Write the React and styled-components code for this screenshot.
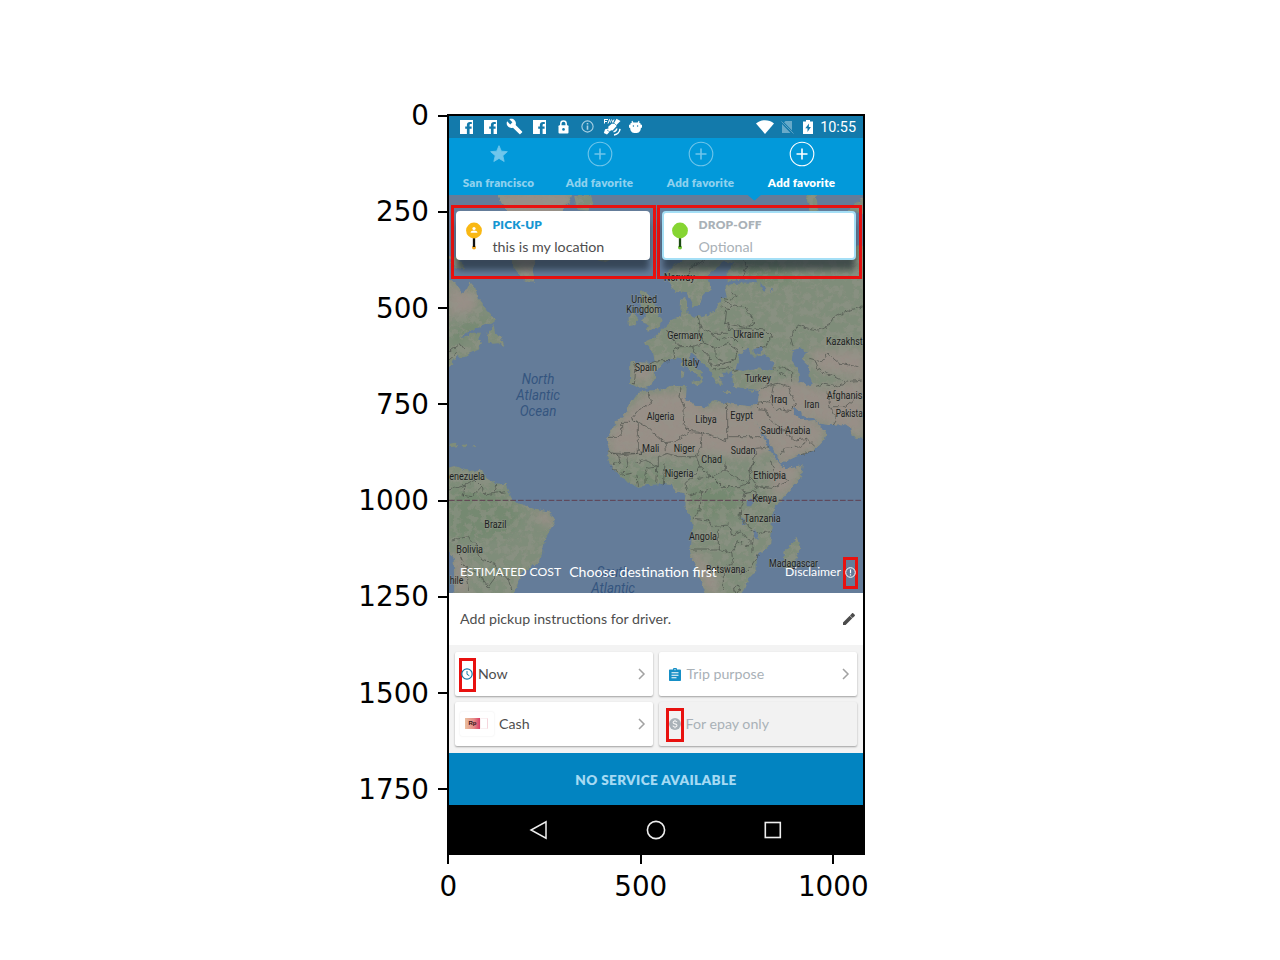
import React from "react";
import styled, { createGlobalStyle } from "styled-components";

const GlobalStyle = createGlobalStyle`
  * { box-sizing: border-box; }
  body { margin: 0; background: #fff; font-family: Lato, "Open Sans", sans-serif; }
`;

const Figure = styled.main`
  width: 1280px;
  height: 960px;
  overflow: hidden;
  padding: 68px 0 0 340px;
`;
const PlotRow = styled.div`
  display: flex;
  align-items: flex-start;
`;
const YAxis = styled.div`
  width: 107px;
  display: flex;
  flex-direction: column;
`;
const YTick = styled.div`
  height: 96.25px;
  display: flex;
  align-items: center;
  justify-content: flex-end;
  gap: 9px;
  font: 27.78px/1 "DejaVu Sans", sans-serif;
  color: #000;
  &::after { content: ""; width: 9px; height: 2px; margin-top: -1px; background: #000; }
`;
const XAxis = styled.div`
  display: flex;
  margin-left: 12px;
`;
const XTick = styled.div`
  width: 192.5px;
  display: flex;
  flex-direction: column;
  align-items: center;
  gap: 9px;
  font: 27.78px/1 "DejaVu Sans", sans-serif;
  color: #000;
  &::before { content: ""; width: 2px; height: 9px; background: #000; }
`;
const Phone = styled.section`
  width: 418px;
  height: 741px;
  margin-top: 46px;
  border: 2px solid #000;
  display: flex;
  flex-direction: column;
  overflow: hidden;
  flex: none;
`;

const StatusBar = styled.header`
  height: 22px;
  flex: none;
  background: #137aab;
  display: flex;
  align-items: center;
  padding: 0 7px 1px 5.5px;
  color: #fff;
`;
const StatusSlot = styled.div`
  width: ${(p) => p.$w || 24.2}px;
  height: 100%;
  display: flex;
  align-items: center;
  justify-content: center;
`;
const Spacer = styled.div`
  flex: 1;
`;
const Time = styled.div`
  font: 14.4px/22px Roboto, sans-serif;
  padding-top: 2px;
  margin-left: 3px;
`;

const Tabs = styled.nav`
  height: 57px;
  flex: none;
  background: #0299da;
  display: grid;
  grid-template-columns: repeat(4, 101px);
  margin-left: -1px;
`;
const Tab = styled.div`
  display: flex;
  flex-direction: column;
  align-items: center;
  padding-top: 3px;
  color: ${(p) => (p.$active ? "#fff" : "#8fd1ee")};
`;
const TabIcon = styled.div`
  height: 26px;
  display: flex;
  align-items: center;
`;
const TabLabel = styled.div`
  font-size: 11.6px;
  letter-spacing: 0.18px;
  font-weight: 800;
  line-height: 16px;
  margin-top: 8px;
  white-space: nowrap;
`;

const MapArea = styled.section`
  height: 398px;
  flex: none;
  display: grid;
  background: #647c99;
  & > * { grid-area: 1 / 1; }
`;
const MapSvg = styled.svg`
  display: block;
  width: 414px;
  height: 398px;
`;
const MapOverlay = styled.div`
  display: flex;
  flex-direction: column;
  justify-content: space-between;
  padding: 10px 1px 4px 2px;
  z-index: 1;
`;
const CardRow = styled.div`
  display: flex;
  gap: 1px;
`;
const CardOutline = styled.div`
  width: 205px;
  height: 74px;
  border: 3px solid #e8110f;
  padding: 3px 0 0 2px;
`;
const PlaceCard = styled.div`
  width: 194px;
  height: 49px;
  border-radius: 4px;
  background: #fff;
  border: 2px solid ${(p) => (p.$soft ? "#a5dff6" : "#fff")};
  box-shadow: 0 11px 6px -1px rgba(25, 35, 45, 0.6);
  display: flex;
  align-items: flex-start;
`;
const PinBox = styled.div`
  width: 34.5px;
  padding: 8px 0 0 7px;
`;
const CardTitle = styled.div`
  font-size: 11.9px;
  letter-spacing: 0.22px;
  font-weight: 800;
  line-height: 16px;
  padding-top: 4px;
  color: ${(p) => (p.$soft ? "#a9b1b7" : "#1496d2")};
`;
const CardText = styled.div`
  font-size: 14.25px;
  line-height: 20px;
  margin-top: 4px;
  color: ${(p) => (p.$soft ? "#a9b1b7" : "#4e4e4e")};
`;
const CostBar = styled.div`
  display: flex;
  align-items: center;
  color: #fff;
  height: 32px;
  padding: 0 4px 0 9px;
`;
const CostText = styled.div`
  font-size: ${(p) => p.$size}px;
  margin-right: ${(p) => p.$gap || 0}px;
  white-space: nowrap;
  padding-bottom: 4px;
`;
const RedBox = styled.div`
  width: ${(p) => p.$w || 17}px;
  height: ${(p) => p.$h || 34}px;
  margin-top: ${(p) => p.$drop || 0}px;
  border: 3px solid #e8110f;
  display: flex;
  align-items: center;
  justify-content: center;
  flex: none;
  & > svg { flex: none; margin-left: ${(p) => p.$shift || 0}px; margin-top: -2px; }
`;

const Instructions = styled.section`
  height: 52px;
  flex: none;
  background: #fff;
  display: flex;
  align-items: center;
  justify-content: space-between;
  padding: 0 8px 1px 11px;
  font-size: 14.2px;
  color: #4e4e4e;
`;
const Options = styled.section`
  height: 108px;
  flex: none;
  background: #f3f3f3;
  display: grid;
  grid-template-columns: 198px 198px;
  grid-template-rows: 44px 44px;
  gap: 6px;
  padding: 7px 6px;
`;
const Option = styled.div`
  background: ${(p) => (p.$disabled ? "#f2f2f2" : "#fff")};
  border-radius: 2px;
  box-shadow: 0 1px 2px rgba(0, 0, 0, 0.35);
  display: flex;
  align-items: center;
  padding: 0 7.5px 0 ${(p) => p.$left}px;
  gap: ${(p) => p.$gap}px;
  color: ${(p) => (p.$soft ? "#a9b1b7" : "#4e4e4e")};
`;
const OptionLabel = styled.div`
  flex: 1;
  font-size: 14.2px;
  line-height: 18px;
  padding-bottom: 1px;
`;
const CashIcon = styled.div`
  width: 34px;
  height: 24px;
  border-radius: 2px;
  box-shadow: 0 0 2px rgba(0, 0, 0, 0.1);
  display: flex;
  align-items: center;
  padding: 0 0 2px 5px;
`;
const Note = styled.div`
  width: 15px;
  height: 11px;
  background: linear-gradient(90deg, #eabf9f, #e58a86 60%, #d83c66);
  font: bold 6px/11px "Liberation Sans", sans-serif;
  text-align: center;
  color: #301018;
`;
const NoteEdge = styled.div`
  width: 8px;
  height: 11px;
  border: 1px solid #faeff1;
  border-right-color: #f5d5dc;
`;
const Action = styled.div`
  height: 52px;
  flex: none;
  background: #0284c1;
  color: #a5daf3;
  font-size: 13.6px;
  letter-spacing: 0.35px;
  font-weight: 800;
  display: flex;
  align-items: center;
  justify-content: center;
  padding-top: 1px;
`;
const NavBar = styled.footer`
  flex: 1;
  background: #000;
  display: flex;
  align-items: center;
  justify-content: center;
  gap: 97px;
  padding: 1px 0 0;
`;

const Facebook = () => (
  <svg width="13" height="14" viewBox="0 0 13 14">
    <path d="M0 0h13v14H9.600V8.800h2V6.500h-2V5.200c0-.8.3-1.200 1.100-1.200h1.100V1.900H10C8 1.900 6.900 3 6.900 4.800v1.700H5.200v2.300h1.700V14H0z" fill="#fff" />
  </svg>
);
const Wrench = () => (
  <svg width="17" height="17" viewBox="0 0 24 24">
    <path d="M22.700 19l-9.100-9.100c.9-2.300.4-5-1.500-6.900-2-2-5-2.400-7.400-1.300L9 6 6 9 1.600 4.700C.4 7.100.9 10.100 2.900 12.100c1.900 1.900 4.600 2.400 6.900 1.500l9.100 9.100c.4.400 1 .4 1.400 0l2.300-2.300c.5-.4.5-1.100.1-1.400z" fill="#fff" />
  </svg>
);
const Lock = () => (
  <svg width="11" height="14" viewBox="0 0 11 14">
    <path d="M2.800 6V3.800a2.700 2.700 0 0 1 5.400 0V6" fill="none" stroke="#fff" strokeWidth="1.500" />
    <rect x=".5" y="5.300" width="10" height="8.200" rx="1" fill="#fff" />
    <circle cx="5.500" cy="9.400" r="1.300" fill="#137aab" />
  </svg>
);
const Info = () => (
  <svg width="13" height="13" viewBox="0 0 13 13">
    <circle cx="6.500" cy="6.500" r="5.600" fill="none" stroke="#a9d0e4" strokeWidth="1.100" />
    <path d="M6.500 3.100v1.400M6.500 5.600v4.200" stroke="#a9d0e4" strokeWidth="1.600" />
  </svg>
);
const Satellite = () => (
  <svg width="18" height="18" viewBox="0 0 18 18">
    <path d="M1 1.500h4M1.500 1.500v4M1.500 3.500h2.500M5 5.500l1.500-4 1 3M8.500 1.500l1.300 3 1.200-3" stroke="#fff" strokeWidth="1" fill="none" />
    <path d="M13.500 .8l4 2.200-4.300 4.300 .3 .9-4 4.200-1.500-.2L4 16.500.8 15l1.300-3.800 3.400-.7-.3-1.800L9 5.500l1.500.5z" fill="#fff" />
    <path d="M4 12l3 2M11 5l2 2" stroke="#137aab" strokeWidth=".6" />
    <path d="M10.500 13.800a4 4 0 0 0 3.300-3.300M11 16.900a6.500 6.500 0 0 0 6-6" stroke="#fff" strokeWidth="1.500" fill="none" />
  </svg>
);
const Droid = () => (
  <svg width="13" height="14" viewBox="0 0 13 14">
    <path d="M3 1l1 2.500M10 1L9 3.500" stroke="#fff" strokeWidth="1.100" />
    <path d="M3 2.500h7c1 0 1.700.7 1.700 2.200H13v3h-1.100C11.700 11.500 10 13 6.500 13S1.300 11.500 1.100 7.700H0v-3h1.300C1.300 3.200 2 2.500 3 2.500z" fill="#fff" />
    <circle cx="4.400" cy="6" r=".7" fill="#137aab" />
    <circle cx="8.600" cy="6" r=".7" fill="#137aab" />
  </svg>
);
const Wifi = () => (
  <svg width="18" height="14" viewBox="0 0 18 14">
    <path d="M9 14L0 3.500C5 -.8 13 -.8 18 3.500z" fill="#fff" />
  </svg>
);
const NoSim = () => (
  <svg width="13" height="14" viewBox="0 0 13 14">
    <path d="M4.500 1H11v9.500L3 2.200zM1 3.900L9.500 13H1z" fill="#fff" opacity=".36" />
    <path d="M.5 1.500l12 12" stroke="#fff" strokeWidth="1" opacity=".3" />
  </svg>
);
const Battery = () => (
  <svg width="10" height="14" viewBox="0 0 10 14">
    <path d="M3 0h4v1.500h3V14H0V1.500h3z" fill="#fff" />
    <path d="M6 3.500L2.300 8.300h2.200V12l3.400-4.900H5.800z" fill="#137aab" />
  </svg>
);
const Star = () => (
  <svg width="20" height="20" viewBox="0 0 24 24">
    <path d="M12 17.300L18.200 21l-1.600-7L22 9.200l-7.200-.6L12 2 9.200 8.600 2 9.200 7.500 14l-1.700 7z" fill="#6fc6ec" stroke="#6fc6ec" />
  </svg>
);
const Plus = ({ active }) => (
  <svg width="26" height="26" viewBox="0 0 26 26" fill="none" stroke={active ? "#fff" : "#70c5ea"}>
    <circle cx="13" cy="13" r="11.800" strokeWidth="1.100" />
    <path d="M13 7.500v11M7.500 13h11" strokeWidth="1.600" />
  </svg>
);
const Pin = ({ green }) => (
  <svg width="18" height="30" viewBox="0 0 18 30">
    <circle cx="9" cy="26.500" r="2" fill={green ? "#6cc52f" : "#f2a81d"} />
    <path d="M9 15v11" stroke={green ? "#1d4a12" : "#111"} strokeWidth="2.300" />
    <circle cx="9" cy="9.500" r="7.900" fill={green ? "#86d532" : "#f9b814"} />
    {!green && (
      <>
        <circle cx="9" cy="7.500" r="1.600" fill="#fff" />
        <path d="M5.500 11.800c0-1.700 1.700-2.400 3.500-2.400s3.500.7 3.500 2.400z" fill="#fff" />
      </>
    )}
  </svg>
);
const Alert = () => (
  <svg width="11" height="11" viewBox="0 0 11 11" fill="none" stroke="#fff">
    <circle cx="5.500" cy="5.500" r="4.800" strokeWidth="1" />
    <path d="M5.500 2.500v3.800M5.500 7.300v1.300" strokeWidth="1.200" />
  </svg>
);
const Pencil = () => (
  <svg width="12" height="12" viewBox="0 0 12 12">
    <path d="M0 9.400V12h2.600l6.700-6.700-2.600-2.600zM11.700 2.900c.4-.4.4-.7 0-1.100L10.200.3c-.4-.4-.7-.4-1.100 0L7 2.400l2.600 2.600z" fill="#4c4c4c" />
  </svg>
);
const Clock = () => (
  <svg width="12" height="12" viewBox="0 0 12 12" fill="none" stroke="#1779a6">
    <circle cx="6" cy="6" r="5.200" strokeWidth="1.200" />
    <path d="M6 3v3.300l2.300 1.400" strokeWidth="1" />
  </svg>
);
const Clipboard = () => (
  <svg width="12" height="13" viewBox="0 0 12 13">
    <path d="M1 1.500h3a2 2 0 0 1 4 0h3c.5 0 1 .4 1 1V12c0 .6-.5 1-1 1H1c-.6 0-1-.4-1-1V2.500c0-.6.4-1 1-1z" fill="#168fc6" />
    <path d="M2.500 4.800h7M2.500 7.300h7M2.500 9.800h5" stroke="#fff" strokeWidth="1.100" />
    <circle cx="6" cy="1.700" r=".6" fill="#fff" />
  </svg>
);
const Dollar = () => (
  <svg width="12" height="12" viewBox="0 0 12 12">
    <circle cx="6" cy="6" r="5.900" fill="#a9b1b7" />
    <path d="M8 4.200C7.700 3.300 7 3 6 3c-1.100 0-1.900.5-1.900 1.400C4.100 6.400 8 5.400 8 7.500 8 8.500 7.200 9 6 9s-1.900-.5-2.100-1.400M6 1.800V3M6 9v1.200" fill="none" stroke="#f2f2f2" strokeWidth="1.100" />
  </svg>
);
const Chevron = () => (
  <svg width="9" height="12" viewBox="0 0 9 12" fill="none" stroke="#a2a2a2" strokeWidth="1.500">
    <path d="M2 1l5 5-5 5" />
  </svg>
);

const LAND = [
  // Greenland, Iceland, Svalbard
  "M152 0H385L372 40 350 62 322 130 300 190 268 215 262 250 268 278 250 276 232 268 212 240 190 190 178 120 186 60 170 40z",
  "M388 15H436L446 40 430 62 395 60z",
  "M455 195L500 188 508 205 480 217 458 211z",
  "M1078 5L1110 5 1122 66 1098 68z",
  "M1208 66L1230 40 1262 20V70z",
  // North America
  "M0 195L40 205 62 240 30 232 12 205zM0 262L30 278 50 308 66 300 76 277 90 292 98 325 112 342 128 362 150 385 148 398 120 405 84 420 60 430 50 444 68 440 84 428 108 428 100 448 112 460 104 475 72 488 60 502 35 500 15 530 0 530z",
  "M128 430L146 405 150 430 170 440 178 468 160 460 130 462z",
  "M12 762L28 758 40 768 20 772zM48 768L66 766 68 771 50 772zM84 769L92 769 92 773z",
  // South America
  "M0 835L30 828 60 840 88 842 110 838 125 862 150 880 182 882 192 905 204 930 228 940 262 955 304 962 328 980 328 1000 308 1030 298 1060 294 1090 280 1118 250 1135 226 1155 216 1190 200 1215H28L26 1100 0 1070z",
  // British Isles
  "M588 305L606 302 610 320 630 345 650 390 640 415 600 424 610 405 590 395 604 372 586 350zM548 380L566 370 580 385 572 405 548 408z",
  // Eurasia
  "M660 252L690 222 725 205 770 190 815 192 860 205 900 195 950 205 1010 200 1270 165V750L1220 740 1215 712 1200 702 1150 705 1120 700 1108 685 1085 682 1060 662 1042 645 1050 672 1078 694 1110 690 1125 712 1145 722 1140 748 1110 780 1065 795 1010 820 995 795 978 762 952 725 928 680 920 650 938 635 945 600 908 596 865 590 860 545 830 545 836 560 820 558 834 580 822 590 808 570 794 540 770 520 752 500 738 490 734 500 752 535 775 548 766 552 775 572 763 585 762 560 730 535 712 508 690 505 660 512 632 545 628 570 612 590 584 596 555 580 556 515 610 518 630 515 622 480 596 458 630 442 660 412 680 392 705 382 708 330 724 322 728 370 755 382 810 365 825 330 845 320 838 290 860 282 940 280 935 262 880 270 845 275 845 240 870 220 840 215 806 240 785 260 800 300 775 310 765 345 745 350 725 310 690 305z",
  // Italian islands, Crete, Cyprus
  "M705 545L718 542 716 562 706 565zM708 520L716 518 713 536zM738 575L764 572 758 590zM830 604L858 603 858 608 832 609zM908 602L930 599 922 612z",
  // Africa
  "M578 606L600 602 640 600 690 588 725 588 722 630 745 642 775 655 808 630 845 640 928 650 930 680 952 735 975 785 1008 825 1020 835 1073 825 1068 860 1040 895 1000 940 980 970 980 1035 975 1065 935 1100 935 1140 912 1165 900 1195 885 1215H784L758 1150 735 1085 745 1015 738 985 718 950 722 910 690 905 680 885 650 882 610 885 580 890 535 868 510 840 488 808 485 800 495 780 486 742 510 700 540 670 555 640z",
  "M1055 1040L1066 1075 1045 1130 1020 1135 1015 1085 1040 1065z",
];
const SAND = [
  "M152 0H385L372 40 322 130 300 190 268 215 262 250 255 270 232 250 212 220 190 150 178 100z",
  "M12 262L40 300 80 300 100 340 70 375 40 370 12 390z",
  "M540 670L600 610 725 605 775 655 845 640 928 650 975 785 930 800 870 805 800 790 700 800 600 795 500 800 486 742z",
  "M935 590L1060 570 1130 600 1260 560V745L1150 705 1050 660 1145 722 1110 780 1010 820 930 690z",
  "M975 820L1073 825 1040 895 990 930 975 880z",
  "M1090 480L1260 480V560L1120 545z",
  "M735 1085L760 1085 790 1130 830 1190 790 1215z",
  "M265 960L328 980 320 1010 285 1000z",
  "M28 1080L60 1110 70 1210 28 1210z",
  "M562 520L620 525 620 570 570 580z",
];
const LUSH = [
  "M12 900L100 900 200 935 230 990 180 1040 100 1050 12 1040z",
  "M730 900L800 880 890 905 880 980 800 985 740 960z",
  "M860 215L1000 210 1050 270 980 290 900 260z",
  "M60 400L150 385 84 428 30 470 12 440z",
  "M500 835L600 850 680 855 650 880 580 885z",
];
const WATER = [
  "M872 540L885 490 910 478 922 500 935 500 960 492 985 520 985 540 930 535 895 542z",
  "M925 480L950 472 955 485 930 495z",
  "M1045 480L1070 473 1088 490 1072 508 1090 525 1095 560 1103 582 1082 588 1062 570 1060 540 1040 510z",
  "M908 930L925 928 922 952 908 952z",
  "M888 980L893 980 900 1005 893 1003zM925 1020L932 1018 938 1050 930 1045z",
  "M972 298L985 298 980 305zM945 283L962 290 965 306 952 300z",
];
const BORDERS = [
  "M675 512L640 512 612 520M566 520L572 540 568 583M610 605L620 640 580 660 560 685 605 710 660 758 685 755 735 725 715 700 718 650 705 620 708 590",
  "M530 697H555M530 697V728L518 742H490M558 680L580 700V790H600 500M580 790L520 795 490 785M735 725L768 727 845 755V640M848 740H950M768 727L770 770 755 800 765 830",
  "M660 758L665 790 640 800 640 830 610 835 600 855M665 790L700 800 755 800M520 795L525 815 500 822M545 800L550 830 530 850M575 820L600 810 640 830M600 855L600 882M575 855L580 888M635 835L632 878M660 820L655 885M500 830L530 855 560 850",
  "M765 830L745 860 720 880 725 905M765 830L800 860 840 840 845 808M760 865L800 860 830 890 885 890 910 880 870 860 840 840M910 880L925 815 935 775 975 770M925 815L910 850 935 890 980 895 1035 870 990 850 975 810M885 890L900 910 888 950 885 985 910 1010 940 1030 980 1025M930 895L935 920 975 940M900 910L930 905M730 915L770 905 800 895M770 905L765 960 745 985",
  "M745 985L790 990 800 1010 850 1005 860 1035 890 1025 920 1060 900 1070 880 1055 860 1090 830 1080 740 1080M820 1015V1080M860 1090L865 1120 835 1135V1200M860 1120L885 1150 910 1140 940 1095M865 1195L880 1185 888 1200 870 1208zM925 1040L920 1085",
  "M945 595L975 585 1000 580 1030 590 1050 640 1035 665 990 655 970 635 935 640M985 585L975 635M935 655L965 660 975 690 1050 750 1085 745 1110 770M1005 795L1020 775 1070 770 1085 745M1050 640L1045 650",
  "M985 535L1010 530 1040 545 1040 575M1000 545L1025 560M865 545L880 540M1110 590L1140 580 1180 590 1210 575 1250 570M1145 600L1155 650 1175 690 1165 705M1155 650L1200 650 1240 615M1090 505L1130 515 1150 490 1185 520 1240 530M1110 510L1120 540 1170 560 1200 575",
  "M1045 470L1035 440 1060 405 1090 415 1120 420 1150 410 1160 385 1215 360 1255 350M865 345L900 350 930 400 895 412 840 400 845 360zM835 330L860 345M830 350L850 355M850 400L855 420 905 415 960 420 980 440 960 470 930 475M760 380L765 410 800 430 845 430 855 420",
  "M660 415L690 430 685 450 705 470 740 470 780 460 765 430 765 410M705 470L685 480 690 505M740 470L755 495M780 460L810 475 850 460 880 480 870 510 840 520 810 500 810 475M790 500L800 530 840 520M820 450L860 440 890 470M775 480L800 510M805 540L840 535 865 530M690 430L665 420M800 430L825 455",
  "M885 200L905 225 890 265M720 270L740 230 790 205 850 200M860 300L875 320 860 330 830 325",
  "M12 900L60 885 90 870 110 890 80 920 50 915M60 885L55 920M110 890L120 915 150 910 155 880M150 910L185 905M20 1050L70 1040 90 1060 110 1110 150 1120 160 1150 130 1190 100 1150 60 1130 45 1095 30 1080M160 1150L190 1165 200 1200M60 1130L70 1200",
  "M12 485L45 460 60 480M12 510L35 490M1065 795L1110 780",
];
const COUNTRIES = [
  ["Norway", 657, 272, 92], ["United", 559, 339, 77], ["Kingdom", 544, 370, 107],
  ["Germany", 667, 447, 107], ["Ukraine", 865, 445, 92], ["Kazakhst", 1143, 465, 110],
  ["Italy", 711, 527, 52], ["Spain", 569, 544, 67], ["Turkey", 899, 576, 79],
  ["Iraq", 979, 639, 48], ["Iran", 1078, 654, 45], ["Afghanis", 1145, 626, 107],
  ["Pakista", 1172, 681, 81], ["Algeria", 605, 689, 83], ["Libya", 751, 698, 64],
  ["Egypt", 856, 686, 68], ["Saudi Arabia", 947, 732, 149], ["Mali", 591, 786, 52],
  ["Niger", 686, 786, 64], ["Sudan", 857, 793, 74], ["Chad", 769, 819, 62],
  ["Nigeria", 659, 860, 86], ["Ethiopia", 925, 866, 98], ["Kenya", 922, 937, 74],
  ["Tanzania", 897, 996, 110], ["Angola", 732, 1050, 84], ["Brazil", 118, 1015, 66],
  ["Bolivia", 34, 1088, 80], ["Madagascar", 972, 1130, 147], ["Botswana", 783, 1149, 118],
  ["enezuela", 13, 870, 107], ["hile", 14, 1181, 41],
];
const OCEANS = [
  ["North", 230, 582, 98], ["Atlantic", 214, 630, 131], ["Ocean", 224, 678, 110],
  ["South", 455, 1160, 98], ["Atlantic", 439, 1208, 131],
];

const WorldMap = () => (
  <MapSvg viewBox="12 15 1242 1194">
    <defs>
      <filter id="coast" x="-10" y="-10" width="1290" height="1240" filterUnits="userSpaceOnUse" colorInterpolationFilters="sRGB">
        <feTurbulence type="fractalNoise" baseFrequency="0.07" numOctaves="2" seed="4" result="n" />
        <feDisplacementMap in="SourceGraphic" in2="n" scale="16" xChannelSelector="R" yChannelSelector="G" />
      </filter>
      <filter id="terrain" x="0" y="0" width="1270" height="1220" filterUnits="userSpaceOnUse" colorInterpolationFilters="sRGB">
        <feTurbulence type="fractalNoise" baseFrequency="0.045" numOctaves="5" seed="11" />
        <feColorMatrix values="0 0 0 0 .59  0 0 0 0 .58  0 0 0 0 .54  6 0 0 0 -2.700" />
        <feComposite operator="in" in2="SourceGraphic" />
      </filter>
      <filter id="soft"><feGaussianBlur stdDeviation="12" /></filter>
      <clipPath id="land"><path d={LAND.join("")} /></clipPath>
    </defs>
    <g filter="url(#coast)">
      <path d={LAND.join("")} fill="#7f8d7a" />
      <g clipPath="url(#land)">
        <path d={LUSH.join("")} fill="#758971" filter="url(#soft)" />
        <path d={SAND.join("")} fill="#988f87" filter="url(#soft)" />
        <path d={LAND.join("")} fill="#fff" filter="url(#terrain)" opacity=".45" />
      </g>
      <path d={WATER.join("")} fill="#647c99" />
      <path d={BORDERS.join("")} fill="none" stroke="#454a45" strokeWidth="2.200" opacity=".85" />
    </g>
    <path d="M12 931H1254" stroke="#5e3f50" strokeWidth="3" strokeDasharray="17 6" />
    <g fontFamily="Roboto, sans-serif" fontSize="30" fill="#1c1e1e" stroke="#9a9c93" strokeOpacity=".45" strokeWidth="4" paintOrder="stroke">
      {COUNTRIES.map(([name, x, y, w]) => (
        <text key={name} x={x} y={y} textLength={w} lengthAdjust="spacingAndGlyphs">{name}</text>
      ))}
    </g>
    <g fontFamily="Roboto, sans-serif" fontSize="45" fontStyle="italic" fill="#34557f">
      {OCEANS.map(([name, x, y, w]) => (
        <text key={name + y} x={x} y={y} textLength={w} lengthAdjust="spacingAndGlyphs">{name}</text>
      ))}
    </g>
    <path d="M907 14H949L928 32z" fill="#0299da" />
  </MapSvg>
);

export default function App() {
  return (
    <Figure>
      <GlobalStyle />
      <PlotRow>
        <YAxis>
          {[0, 250, 500, 750, 1000, 1250, 1500, 1750].map((n) => <YTick key={n}>{n}</YTick>)}
        </YAxis>
        <Phone>
          <StatusBar>
            <StatusSlot><Facebook /></StatusSlot>
            <StatusSlot><Facebook /></StatusSlot>
            <StatusSlot><Wrench /></StatusSlot>
            <StatusSlot><Facebook /></StatusSlot>
            <StatusSlot><Lock /></StatusSlot>
            <StatusSlot><Info /></StatusSlot>
            <StatusSlot><Satellite /></StatusSlot>
            <StatusSlot><Droid /></StatusSlot>
            <Spacer />
            <StatusSlot $w={22}><Wifi /></StatusSlot>
            <StatusSlot $w={22}><NoSim /></StatusSlot>
            <StatusSlot $w={19}><Battery /></StatusSlot>
            <Time>10:55</Time>
          </StatusBar>
          <Tabs>
            <Tab><TabIcon><Star /></TabIcon><TabLabel>San francisco</TabLabel></Tab>
            <Tab><TabIcon><Plus /></TabIcon><TabLabel>Add favorite</TabLabel></Tab>
            <Tab><TabIcon><Plus /></TabIcon><TabLabel>Add favorite</TabLabel></Tab>
            <Tab $active><TabIcon><Plus active /></TabIcon><TabLabel>Add favorite</TabLabel></Tab>
          </Tabs>
          <MapArea>
            <WorldMap />
            <MapOverlay>
              <CardRow>
                <CardOutline>
                  <PlaceCard>
                    <PinBox><Pin /></PinBox>
                    <div><CardTitle>PICK-UP</CardTitle><CardText>this is my location</CardText></div>
                  </PlaceCard>
                </CardOutline>
                <CardOutline>
                  <PlaceCard $soft>
                    <PinBox><Pin green /></PinBox>
                    <div><CardTitle $soft>DROP-OFF</CardTitle><CardText $soft>Optional</CardText></div>
                  </PlaceCard>
                </CardOutline>
              </CardRow>
              <CostBar>
                <CostText $size={12.2} $gap={8}>ESTIMATED COST</CostText>
                <CostText $size={14.1}>Choose destination first</CostText>
                <Spacer />
                <CostText $size={12.2} $gap={2}>Disclaimer</CostText>
                <RedBox $w={15} $h={32}><Alert /></RedBox>
              </CostBar>
            </MapOverlay>
          </MapArea>
          <Instructions>
            Add pickup instructions for driver.
            <Pencil />
          </Instructions>
          <Options>
            <Option $left={4} $gap={2}><RedBox $drop={2} $shift={-2}><Clock /></RedBox><OptionLabel>Now</OptionLabel><Chevron /></Option>
            <Option $left={10} $gap={5.5} $soft><Clipboard /><OptionLabel>Trip purpose</OptionLabel><Chevron /></Option>
            <Option $left={5} $gap={5}><CashIcon><Note>Rp</Note><NoteEdge /></CashIcon><OptionLabel>Cash</OptionLabel><Chevron /></Option>
            <Option $left={7} $gap={1.5} $soft $disabled><RedBox $drop={2} $w={18} $shift={-1}><Dollar /></RedBox><OptionLabel>For epay only</OptionLabel></Option>
          </Options>
          <Action>NO SERVICE AVAILABLE</Action>
          <NavBar>
            <svg width="20" height="20" viewBox="0 0 20 20"><path d="M17 1.800v16.400L2 10z" fill="none" stroke="#eee" strokeWidth="1.500" /></svg>
            <svg width="20" height="20" viewBox="0 0 20 20"><circle cx="10" cy="10" r="8.600" fill="none" stroke="#eee" strokeWidth="1.600" /></svg>
            <svg width="20" height="20" viewBox="0 0 20 20"><rect x="2.300" y="2.500" width="15" height="15" fill="none" stroke="#eee" strokeWidth="1.600" /></svg>
          </NavBar>
        </Phone>
      </PlotRow>
      <XAxis>
        {[0, 500, 1000].map((n) => <XTick key={n}>{n}</XTick>)}
      </XAxis>
    </Figure>
  );
}
